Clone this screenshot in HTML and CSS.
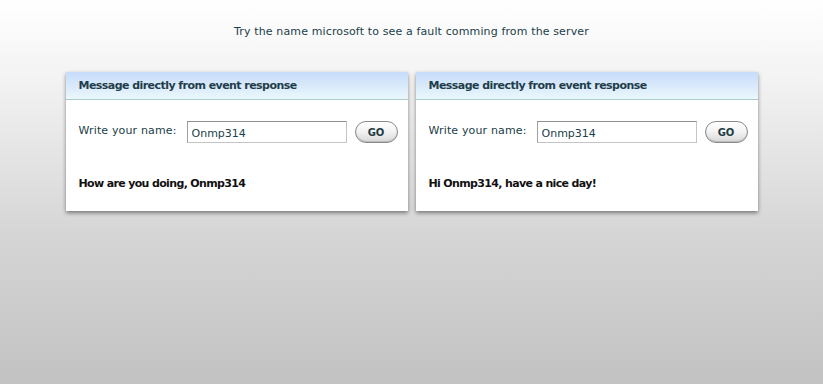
FILE: index.html
```html
<!DOCTYPE html>
<html lang="en">
<head>
    <meta charset="UTF-8">
    <title>Event response demo</title>
    <link rel="stylesheet" href="styles.css">
</head>
<body>

<p class="hint">Try the name microsoft to see a fault comming from the server</p>

<div class="panels">
    <div class="panel">
        <div class="panel-head">Message directly from event response</div>
        <div class="panel-body">
            <div class="form-row">
                <label for="name-1">Write your name:</label>
                <input type="text" id="name-1" value="Onmp314">
                <button>GO</button>
            </div>
            <p class="answer">How are you doing, Onmp314</p>
        </div>
    </div>

    <div class="panel">
        <div class="panel-head">Message directly from event response</div>
        <div class="panel-body">
            <div class="form-row">
                <label for="name-2">Write your name:</label>
                <input type="text" id="name-2" value="Onmp314">
                <button>GO</button>
            </div>
            <p class="answer">Hi Onmp314, have a nice day!</p>
        </div>
    </div>
</div>

</body>
</html>
```

FILE: styles.css
```css
html {
    height: 100%;
}
body {
    font-family: "DejaVu Sans", Verdana, sans-serif;
    font-size: 11px;
    margin: 0;
    padding: 0;
    min-height: 100%;
    background: linear-gradient(to bottom, #ffffff 0%, #f3f3f3 20%, #d6d6d6 60%, #c2c2c2 100%);
    color: #1d3c44;
}
.hint {
    margin: 0;
    padding-top: 25px;
    text-align: center;
    color: #1a4049;
    letter-spacing: 0.13px;
}
.panels {
    display: flex;
    gap: 8px;
    width: 692px;
    margin: 34px auto 0;
}
.panel {
    flex: 1;
    background-color: #fff;
    box-shadow: 0 2px 4px rgba(0, 0, 0, 0.45);
}
.panel-head {
    height: 27px;
    line-height: 28px;
    padding: 0 13px;
    font-weight: bold;
    color: #1f3d4a;
    letter-spacing: -0.55px;
    background: linear-gradient(to bottom, #c6dcfa 0%, #dcecfb 60%, #eaf8fb 100%);
    border-bottom: 1px solid #a9cbd0;
}
.panel-body {
    padding: 21px 10px 21px 13px;
}
.form-row {
    display: flex;
    align-items: flex-start;
}
.form-row label {
    width: 108px;
    padding-top: 3px;
    color: #1a4049;
    letter-spacing: 0.15px;
}
.form-row input {
    width: 160px;
    height: 22px;
    box-sizing: border-box;
    padding: 2px 4px 0;
    border: 1px solid #c4c4c4;
    border-top-color: #8f8f8f;
    border-left-color: #a0a0a0;
    font-family: inherit;
    font-size: 11px;
    color: #1a4049;
}
.form-row button {
    margin-left: 8px;
    width: 43px;
    height: 22px;
    border: 1px solid #8a8a8a;
    border-radius: 11px;
    background: linear-gradient(to bottom, #ffffff 0%, #f2f2f2 50%, #d8d8d8 100%);
    font-family: inherit;
    font-size: 10px;
    font-weight: bold;
    color: #1d3c44;
    cursor: pointer;
    box-shadow: inset 0 -1px 1px rgba(0, 0, 0, 0.15);
}
.answer {
    margin: 34px 0 0;
    font-weight: bold;
    color: #111;
    letter-spacing: -0.65px;
}
```
